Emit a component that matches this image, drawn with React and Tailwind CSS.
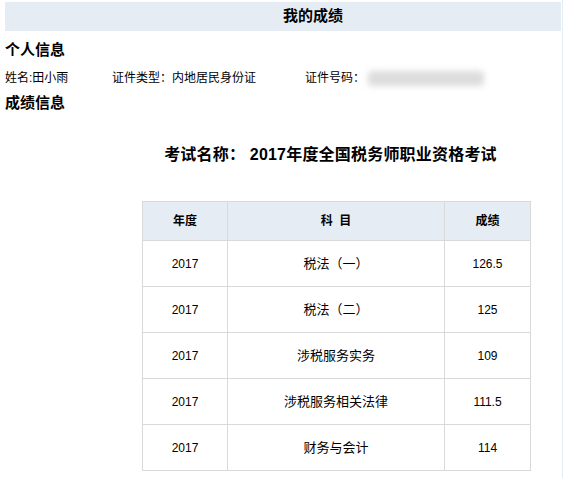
const rows = [
  { year: '2017', subject: '税法（一）', score: '126.5' },
  { year: '2017', subject: '税法（二）', score: '125' },
  { year: '2017', subject: '涉税服务实务', score: '109' },
  { year: '2017', subject: '涉税服务相关法律', score: '111.5' },
  { year: '2017', subject: '财务与会计', score: '114' },
];

const cjk = { fontFamily: '"Liberation Sans", "Noto Sans CJK SC", sans-serif' };

export default function App() {
  return (
    <div className="h-[478px] w-[565px] overflow-hidden bg-white text-black" style={cjk}>
      <div className="ml-[5px] h-full w-[558px] border-r border-[#e3ebf5] pt-[2px]">
        {/* ── Page title ── */}
        <div className="flex h-[29px] w-[556px] items-center justify-center bg-[#e5ecf4] pl-[60px] text-[15px] font-bold">
          我的成绩
        </div>

        {/* ── Personal info ── */}
        <h2 className="mt-[10px] text-[15px] font-bold leading-[18px]">个人信息</h2>
        <div className="mt-[9px] flex h-[20px] items-center whitespace-nowrap text-[12px]">
          <span className="w-[107px] shrink-0">姓名:田小雨</span>
          <span className="w-[193px] shrink-0">证件类型：内地居民身份证</span>
          <span className="shrink-0">证件号码：</span>
          <span className="ml-[3px] h-[15px] w-[116px] shrink-0 rounded-sm bg-[#dcdcdc] blur-[3px]" />
        </div>
        <h2 className="mt-[6px] text-[15px] font-bold leading-[18px]">成绩信息</h2>

        {/* ── Scores ── */}
        <div className="ml-[137px] w-[389px]">
          <div className="mt-[33px] pr-[12px] text-center text-[16px] font-bold leading-[20px] tracking-[0.2px]">
            考试名称： 2017年度全国税务师职业资格考试
          </div>
          <table className="mt-[36px] w-[389px] border-collapse text-[12px]">
            <thead>
              <tr className="h-[39px] bg-[#e6ecf3]">
                <th className="w-[85px] border border-[#d9d9d9] font-bold">年度</th>
                <th className="w-[217px] border border-[#d9d9d9] font-bold">科&nbsp;&nbsp;目</th>
                <th className="border border-[#d9d9d9] font-bold">成绩</th>
              </tr>
            </thead>
            <tbody>
              {rows.map((r) => (
                <tr key={r.subject} className="h-[46px]">
                  <td className="border border-[#d9d9d9] text-center">{r.year}</td>
                  <td className="border border-[#d9d9d9] text-center text-[13px]">{r.subject}</td>
                  <td className="border border-[#d9d9d9] text-center">{r.score}</td>
                </tr>
              ))}
            </tbody>
          </table>
        </div>
      </div>
    </div>
  );
}
